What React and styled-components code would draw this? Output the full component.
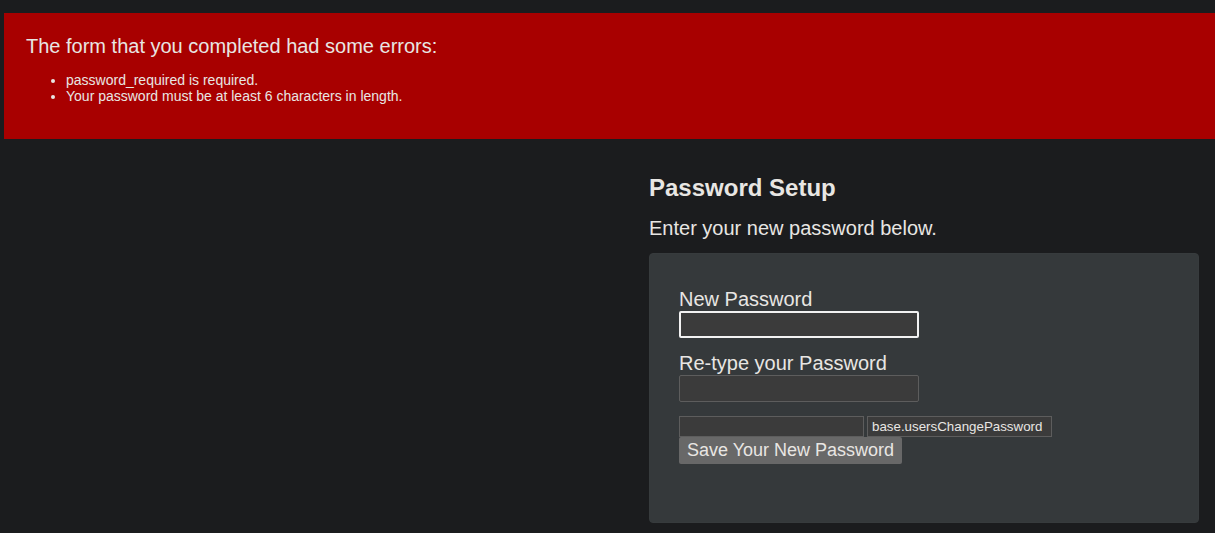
import React from 'react';
import styled, { createGlobalStyle } from 'styled-components';

const GlobalStyle = createGlobalStyle`
  html, body {
    margin: 0;
    padding: 0;
    background: #1b1c1e;
    color: #e8e6e3;
    font-family: "Liberation Sans", Arial, sans-serif;
  }
`;

const Page = styled.div`
  padding-top: 13px;
  min-height: 533px;
  box-sizing: border-box;
`;

const ErrorBanner = styled.div`
  margin-left: 4px;
  background: #a80000;
  padding: 21px 22px 35px;
`;

const ErrorTitle = styled.div`
  font-size: 20px;
  line-height: 24px;
  margin-bottom: 14px;
`;

const ErrorList = styled.ul`
  margin: 0;
  padding-left: 40px;
  font-size: 14px;
  line-height: 16px;
`;

const Main = styled.div`
  display: grid;
  grid-template-columns: 1fr 550px;
  padding-right: 16px;
  margin-top: 34px;
`;

const Column = styled.div``;

const Title = styled.h2`
  margin: 0 0 14px;
  font-size: 24px;
  line-height: 29px;
  font-weight: bold;
`;

const Intro = styled.p`
  margin: 0 0 13px;
  font-size: 20px;
  line-height: 24px;
`;

const Card = styled.form`
  background: #35393b;
  border: 1px solid #373b3d;
  border-radius: 4px;
  padding: 34px 29px 58px;
  min-height: 270px;
  box-sizing: border-box;
`;

const Label = styled.label`
  display: block;
  font-size: 20px;
  line-height: 23px;
  margin-top: ${p => (p.$first ? '0' : '14px')};
`;

const TextInput = styled.input`
  display: block;
  box-sizing: border-box;
  width: 240px;
  height: 27px;
  background: #3b3b3b;
  color: #e8e6e3;
  border: ${p => (p.$focused ? '2px solid #f2f2f2' : '1px solid #5d5d5d')};
  border-radius: 2px;
  outline: none;
  margin: 0;
`;

const HiddenRow = styled.div`
  display: flex;
  gap: 3px;
  margin-top: 14px;
`;

const SmallInput = styled.input`
  box-sizing: border-box;
  width: 185px;
  height: 21px;
  background: #3b3b3b;
  color: #e8e6e3;
  border: 1px solid #5d5d5d;
  border-radius: 0;
  padding: 1px 4px;
  font-family: "Liberation Sans", Arial, sans-serif;
  font-size: 13.33px;
  margin: 0;
`;

const SaveButton = styled.button`
  display: block;
  height: 27px;
  background: #686868;
  color: #e8e6e3;
  border: none;
  border-radius: 2px;
  padding: 0 8px;
  font-family: "Liberation Sans", Arial, sans-serif;
  font-size: 18px;
  line-height: 27px;
  margin: 0;
`;

export default function App() {
  return (
    <Page>
      <GlobalStyle />
      <ErrorBanner>
        <ErrorTitle>The form that you completed had some errors:</ErrorTitle>
        <ErrorList>
          <li>password_required is required.</li>
          <li>Your password must be at least 6 characters in length.</li>
        </ErrorList>
      </ErrorBanner>
      <Main>
        <Column />
        <Column>
          <Title>Password Setup</Title>
          <Intro>Enter your new password below.</Intro>
          <Card onSubmit={e => e.preventDefault()}>
            <Label $first htmlFor="pw1">New Password</Label>
            <TextInput id="pw1" type="password" $focused />
            <Label htmlFor="pw2">Re-type your Password</Label>
            <TextInput id="pw2" type="password" />
            <HiddenRow>
              <SmallInput type="text" defaultValue="" />
              <SmallInput type="text" defaultValue="base.usersChangePassword" />
            </HiddenRow>
            <SaveButton type="submit">Save Your New Password</SaveButton>
          </Card>
        </Column>
      </Main>
    </Page>
  );
}
